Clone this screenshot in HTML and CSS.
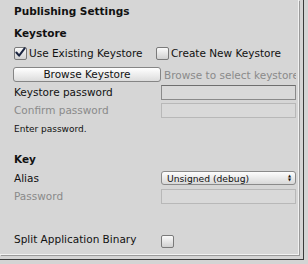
FILE: index.html
```html
<!DOCTYPE html>
<html lang="en">
<head>
    <meta charset="UTF-8">
    <title>Publishing Settings</title>
    <link rel="stylesheet" href="styles.css">
</head>
<body>
    <div class="window">
        <div class="panel">
            <div class="title">Publishing Settings</div>

            <div class="header">Keystore</div>
            <div class="row checks">
                <label class="check-item">
                    <span class="checkbox checked">
                        <svg width="12" height="11" viewBox="0 0 12 11"><path d="M1.5 5.5 L4.5 9 L10.5 1" fill="none" stroke="#1a2440" stroke-width="2.2" stroke-linecap="round" stroke-linejoin="round"/></svg>
                    </span>
                    Use Existing Keystore
                </label>
                <label class="check-item second">
                    <span class="checkbox"></span>
                    Create New Keystore
                </label>
            </div>
            <div class="row browse">
                <button class="button">Browse Keystore</button>
                <span class="hint">Browse to select keystore</span>
            </div>
            <div class="row field-row">
                <span class="label">Keystore password</span>
                <span class="field active"></span>
            </div>
            <div class="row field-row">
                <span class="label disabled">Confirm password</span>
                <span class="field"></span>
            </div>
            <div class="note">Enter password.</div>

            <div class="header key">Key</div>
            <div class="row field-row">
                <span class="label">Alias</span>
                <span class="popup">Unsigned (debug)<span class="arrows">&#9650;<br>&#9660;</span></span>
            </div>
            <div class="row field-row">
                <span class="label disabled">Password</span>
                <span class="field"></span>
            </div>

            <div class="row split">
                <span class="label">Split Application Binary</span>
                <span class="checkbox low"></span>
            </div>
        </div>
    </div>
</body>
</html>
```

FILE: styles.css
```css
body {
    margin: 0;
    background-color: #d4d4d4;
    font-family: "DejaVu Sans", Verdana, sans-serif;
    font-size: 10.5px;
    color: #111;
}
.window {
    width: 303px;
    height: 259px;
    border-right: 1px solid #3a3a3a;
    border-bottom: 1px solid #3a3a3a;
    box-sizing: content-box;
}
.panel {
    width: 299px;
    height: 255px;
    border-right: 1px solid #f2f2f2;
    border-bottom: 1px solid #f2f2f2;
    box-shadow: 1px 1px 0 #9a9a9a;
    padding-left: 14px;
    box-sizing: border-box;
    overflow: hidden;
    background-color: #d6d6d6;
}
.title {
    font-weight: bold;
    height: 14px;
    line-height: 14px;
    margin-top: 4px;
}
.header {
    font-weight: bold;
    height: 14px;
    line-height: 14px;
    margin-top: 8px;
}
.row {
    display: flex;
    align-items: center;
}
.checks {
    height: 14px;
    margin-top: 6px;
}
.check-item {
    display: flex;
    align-items: center;
    gap: 2px;
    width: 143px;
}
.checkbox {
    display: inline-flex;
    align-items: flex-start;
    justify-content: center;
    width: 11px;
    height: 11px;
    border: 1px solid #7a7a7a;
    border-radius: 2px;
    background: linear-gradient(#fafafa, #d0d0d0);
    box-sizing: content-box;
    flex-shrink: 0;
}
.checkbox svg {
    margin-top: -1px;
}
.checkbox.low {
    margin-top: 4px;
}
.browse {
    height: 15px;
    margin-top: 7px;
}
.button {
    width: 148px;
    height: 15px;
    margin-left: -1px;
    padding: 0;
    border: 1px solid #858585;
    border-radius: 3px;
    background: linear-gradient(#ffffff, #dcdcdc);
    font-family: inherit;
    font-size: 10.5px;
    color: #111;
    line-height: 13px;
}
.hint {
    margin-left: 3px;
    color: #8a8a8a;
    white-space: nowrap;
    overflow: hidden;
    width: 132px;
}
.field-row {
    height: 16px;
    margin-top: 2px;
}
.label {
    width: 147px;
    white-space: nowrap;
}
.disabled {
    color: #8a8a8a;
}
.field {
    width: 135px;
    height: 15px;
    border: 1px solid #b8b8b8;
    background-color: #d9d9d9;
    box-sizing: border-box;
}
.field.active {
    border-color: #8a8a8a;
    border-top-color: #6e6e6e;
}
.note {
    font-size: 9px;
    height: 12px;
    line-height: 12px;
    margin-top: 5px;
}
.header.key {
    margin-top: 17px;
}
.header + .field-row {
    margin-top: 4px;
}
.popup {
    display: flex;
    align-items: center;
    justify-content: space-between;
    width: 135px;
    height: 14px;
    padding: 0 4px 0 5px;
    border: 1px solid #8a8a8a;
    border-radius: 3px;
    background: linear-gradient(#fdfdfd, #d8d8d8);
    box-sizing: border-box;
    font-size: 9.2px;
}
.arrows {
    font-size: 4px;
    line-height: 4px;
    text-align: center;
}
.split {
    height: 14px;
    margin-top: 28px;
}
```
